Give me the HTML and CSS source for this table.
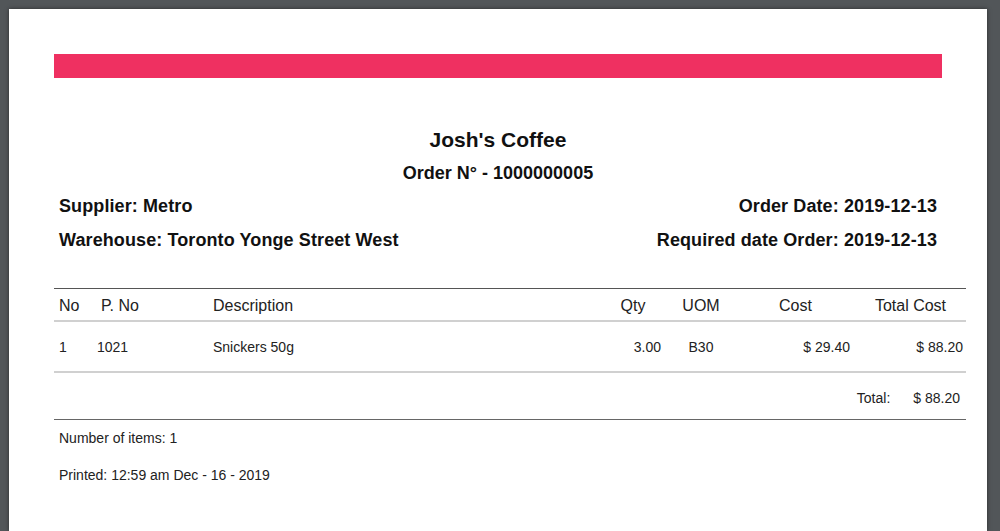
FILE: index.html
```html
<!DOCTYPE html>
<html>
<head>
<meta charset="utf-8">
<link rel="stylesheet" href="styles.css">
</head>
<body>
<div class="page">
  <div class="head">
    <div class="bar"></div>
    <div class="title">Josh's Coffee</div>
    <div class="order">Order N° - 1000000005</div>
    <div class="info">
      <div class="info-row"><span>Supplier: Metro</span><span>Order Date: 2019-12-13</span></div>
      <div class="info-row"><span>Warehouse: Toronto Yonge Street West</span><span>Required date Order: 2019-12-13</span></div>
    </div>
  </div>
  <div class="table">
    <div class="row thead">
      <div class="c c-no">No</div>
      <div class="c c-pno hp">P. No</div>
      <div class="c c-desc">Description</div>
      <div class="c center">Qty</div>
      <div class="c center">UOM</div>
      <div class="c center">Cost</div>
      <div class="c center">Total Cost</div>
    </div>
    <div class="row tbody">
      <div class="c c-no">1</div>
      <div class="c c-pno">1021</div>
      <div class="c c-desc">Snickers 50g</div>
      <div class="c right">3.00</div>
      <div class="c center">B30</div>
      <div class="c right">$ 29.40</div>
      <div class="c right last">$ 88.20</div>
    </div>
    <div class="total">
      <span>Total:</span><span>$ 88.20</span>
    </div>
  </div>
  <div class="foot">
    <div class="items">Number of items: 1</div>
    <div class="printed">Printed: 12:59 am Dec - 16 - 2019</div>
  </div>
</div>
</body>
</html>
```

FILE: styles.css
```css
html, body {
  margin: 0;
  padding: 0;
}
body {
  background: #525659;
  font-family: "Liberation Sans", Arial, sans-serif;
  color: #111;
  overflow: hidden;
  height: 531px;
}
.page {
  margin: 9px 0 0 9px;
  width: 978px;
  height: 522px;
  background: #fff;
  box-shadow: 0 0 4px rgba(0,0,0,0.5);
  padding: 45px 21px 0 45px;
  box-sizing: border-box;
}
.head {
  margin-right: 24px;
}
.bar {
  height: 24px;
  background: #ef3061;
}
.title {
  margin-top: 50px;
  text-align: center;
  font-weight: bold;
  font-size: 21px;
  line-height: 24px;
}
.order {
  margin-top: 10px;
  text-align: center;
  font-weight: bold;
  font-size: 18px;
  line-height: 22px;
}
.info {
  display: flex;
  flex-direction: column;
  gap: 12px;
  margin-top: 11px;
  padding: 0 5px;
}
.info-row {
  display: flex;
  justify-content: space-between;
  font-weight: bold;
  font-size: 18px;
  line-height: 22px;
  letter-spacing: 0.1px;
}
.table {
  margin-top: 37px;
  border-top: 1px solid #555;
}
.row {
  display: grid;
  grid-template-columns: 38px 116px 392px 66px 70px 119px 111px;
  align-items: center;
}
.thead {
  height: 29px;
  padding-top: 2px;
  border-bottom: 2px solid #d0d0d0;
  font-size: 16px;
  color: #222;
}
.tbody {
  height: 49px;
  border-bottom: 2px solid #d0d0d0;
  font-size: 14px;
  color: #222;
}
.c {
  padding: 0 5px;
  white-space: nowrap;
}
.hp {
  padding-left: 9px;
}
.center {
  text-align: center;
}
.right {
  text-align: right;
}
.last {
  padding-right: 3px;
}
.total {
  display: flex;
  justify-content: flex-end;
  gap: 23px;
  align-items: center;
  padding: 4px 6px 0 0;
  box-sizing: border-box;
  height: 47px;
  font-size: 14px;
  color: #222;
  border-bottom: 1px solid #666;
}
.foot {
  padding: 0 5px;
  font-size: 14px;
  color: #222;
}
.items {
  margin-top: 9px;
  line-height: 18px;
}
.printed {
  margin-top: 19px;
  line-height: 18px;
}
```
